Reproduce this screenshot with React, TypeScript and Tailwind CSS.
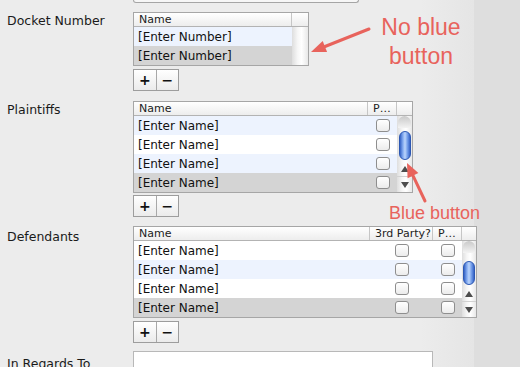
import React from "react";

type Col = { label: string; w: string; check?: boolean };

const rowBg: Record<string, string> = {
  blue: "bg-[#edf3fe]",
  white: "bg-white",
  sel: "bg-[#d4d4d4]",
};

const Checkbox = () => (
  <div className="w-[14px] h-[13px] rounded-[3px] border border-[#8e8e8e] bg-gradient-to-b from-white to-[#ececec]" />
);

const Knob = ({ h }: { h: string }) => (
  <div
    className={`${h} w-[12px] mx-auto rounded-full border border-[#2d58b3] bg-[linear-gradient(to_right,#3462c6,#86adf1_30%,#bcd5fb_50%,#7aa3ec_72%,#3563c7)]`}
  />
);

const Tri = ({ up }: { up?: boolean }) => (
  <svg width="8" height="6" viewBox="0 0 8 6">
    <polygon points={up ? "4,0 8,6 0,6" : "0,0 8,0 4,6"} fill="#4d4d4d" />
  </svg>
);

const Track = ({ variant }: { variant: "empty" | "plaintiffs" | "defendants" }) => (
  <div className="flex-1 flex flex-col bg-[linear-gradient(to_right,#dedede,#f6f6f6_35%,#ffffff_60%,#e8e8e8)]">
    {variant !== "empty" && (
      <>
        <div className="h-[12px] mx-[1px] rounded-t-full bg-[linear-gradient(to_bottom,#c9c9c9,#f3f3f3)]" />
        <div className={variant === "plaintiffs" ? "h-[3px]" : "h-[8px]"} />
        <Knob h={variant === "plaintiffs" ? "h-[29px]" : "h-[24px]"} />
        <div className="flex-1" />
        <div className="h-[15px] flex items-center justify-center">
          <Tri up />
        </div>
        <div className="h-[16px] flex items-center justify-center border-t border-[#d2d2d2]">
          <Tri />
        </div>
      </>
    )}
  </div>
);

const Table = ({
  width,
  cols,
  rows,
  text,
  scroll,
}: {
  width: string;
  cols: Col[];
  rows: string[];
  text: string;
  scroll: "empty" | "plaintiffs" | "defendants";
}) => (
  <div className={`${width} border border-[#a6a6a6] bg-white`}>
    <div className="flex h-[14px] border-b border-[#b3b3b3] bg-gradient-to-b from-white to-[#ededed] text-[11px] leading-[14px] text-[#222]">
      {cols.map((c) => (
        <div key={c.label} className={`${c.w} shrink-0 border-r border-[#c6c6c6] pl-[5px] overflow-hidden whitespace-nowrap`}>
          {c.label}
        </div>
      ))}
      <div className="flex-1" />
    </div>
    <div className="flex">
      <div className="flex flex-col">
        {rows.map((r, i) => (
          <div key={i} className={`flex h-[19px] items-center ${rowBg[r]}`}>
            {cols.map((c) =>
              c.check ? (
                <div key={c.label} className={`${c.w} shrink-0 flex justify-center`}>
                  <Checkbox />
                </div>
              ) : (
                <div key={c.label} className={`${c.w} shrink-0 pl-[4px] text-[12px] text-[#111] whitespace-nowrap`}>
                  {text}
                </div>
              )
            )}
          </div>
        ))}
      </div>
      <Track variant={scroll} />
    </div>
  </div>
);

const PlusMinus = () => (
  <div className="flex w-[46px] h-[22px] border border-[#9d9d9d] bg-gradient-to-b from-white to-[#ebebeb] text-[#111] font-bold text-[14px] leading-[20px]">
    <div className="flex-1 flex items-center justify-center border-r border-[#a8a8a8]">+</div>
    <div className="flex-1 flex items-center justify-center">−</div>
  </div>
);

const Label = ({ children, pad }: { children: React.ReactNode; pad?: string }) => (
  <div className={`w-[133px] shrink-0 pl-[7px] ${pad ?? "pt-[1px]"} text-[12.5px] leading-[16px] text-[#1a1a1a]`}>
    {children}
  </div>
);

export default function App() {
  return (
    <div className="relative w-[520px] h-[367px] overflow-hidden font-['DejaVu_Sans',sans-serif] bg-[linear-gradient(to_right,#ececec_0,#ececec_420px,#e5e5e5_474px,#dedede_474px,#dedede_100%)]">
      <div className="ml-[133px] w-[226px] h-[3px] border border-t-0 border-[#a5a5a5] rounded-b-[3px] bg-[#f6f6f6]" />

      <div className="flex mt-[9px]">
        <Label>Docket Number</Label>
        <div className="flex flex-col">
          <Table
            width="w-[176px]"
            cols={[{ label: "Name", w: "w-[158px]" }]}
            rows={["blue", "sel"]}
            text="[Enter Number]"
            scroll="empty"
          />
          <div className="mt-[3px]">
            <PlusMinus />
          </div>
        </div>
      </div>

      <div className="flex mt-[10px]">
        <Label>Plaintiffs</Label>
        <div className="flex flex-col">
          <Table
            width="w-[280px]"
            cols={[
              { label: "Name", w: "w-[234px]" },
              { label: "P…", w: "w-[29px]", check: true },
            ]}
            rows={["blue", "white", "blue", "sel"]}
            text="[Enter Name]"
            scroll="plaintiffs"
          />
          <div className="mt-[2px]">
            <PlusMinus />
          </div>
        </div>
      </div>

      <div className="flex mt-[9px]">
        <Label pad="pt-[3px]">Defendants</Label>
        <div className="flex flex-col">
          <Table
            width="w-[344px]"
            cols={[
              { label: "Name", w: "w-[236px]" },
              { label: "3rd Party?", w: "w-[63px]", check: true },
              { label: "P…", w: "w-[29px]", check: true },
            ]}
            rows={["white", "blue", "white", "sel"]}
            text="[Enter Name]"
            scroll="defendants"
          />
          <div className="mt-[3px]">
            <PlusMinus />
          </div>
        </div>
      </div>

      <div className="flex mt-[8px]">
        <Label pad="pt-[5px]">In Regards To</Label>
        <div className="w-[300px] h-[40px] border border-[#b8b8b8] bg-white" />
      </div>

      {/* annotations */}
      <div className="absolute left-[371px] top-[13px] w-[100px] text-center font-['Liberation_Sans',sans-serif] text-[23px] leading-[29px] text-[#e8635c]">
        No blue
        <br />
        button
      </div>
      <div className="absolute left-[389px] top-[204px] font-['Liberation_Sans',sans-serif] text-[18px] leading-none text-[#e8635c] whitespace-nowrap">
        Blue button
      </div>
      <svg className="absolute inset-0 pointer-events-none" width="520" height="367">
        <line x1="369" y1="29" x2="325" y2="46.5" stroke="#e8635c" strokeWidth="3" strokeLinecap="round" />
        <polygon points="311,52 327.1,52.1 322.7,40.9" fill="#e8635c" />
        <line x1="425" y1="201" x2="413" y2="175.7" stroke="#e8635c" strokeWidth="3" strokeLinecap="round" />
        <polygon points="407,163 418.4,173.1 407.6,178.3" fill="#e8635c" />
      </svg>
    </div>
  );
}
